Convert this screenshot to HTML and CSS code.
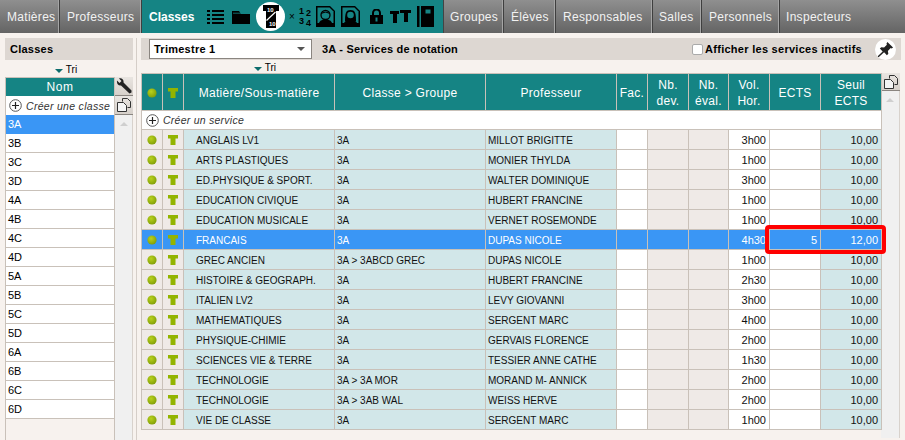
FILE: index.html
```html
<!DOCTYPE html>
<html lang="fr">
<head>
<meta charset="utf-8">
<title>Classes - Services de notation</title>
<link rel="stylesheet" href="styles.css">
</head>
<body>
<svg class="defs" width="0" height="0" aria-hidden="true">
  <defs>
    <radialGradient id="dot" cx="40%" cy="35%" r="70%"><stop offset="0" stop-color="#b9d21c"/><stop offset="1" stop-color="#7f9c06"/></radialGradient>
    <symbol id="shirt" viewBox="0 0 10 10"><path d="M0 0h10v3.500H7.500V10h-5V3.500H0z" fill="#93b400"/></symbol>
    <symbol id="ball" viewBox="0 0 10 10"><circle cx="5" cy="5" r="4.600" fill="url(#dot)"/></symbol>
    <symbol id="plus" viewBox="0 0 13 13"><circle cx="6.500" cy="6.500" r="5.800" fill="#fff" stroke="#555" stroke-width="1"/><path d="M6.500 3v7M3 6.500h7" stroke="#222" stroke-width="1.200"/></symbol>
    <symbol id="copy" viewBox="0 0 14 14"><path d="M5.500 3.500V.5h5l3 3v6h-3" fill="none" stroke="#333"/><path d="M.5 4.500h6l3 3v6h-9z" fill="#f4f4f4" stroke="#333"/></symbol>
  </defs>
</svg>
<nav class="nav">
  <a class="tab tab-matieres">Matières</a>
  <a class="tab tab-profs">Professeurs</a>
  <div class="tab-active">
    <span class="active-label">Classes</span>
    <svg class="ic ic-list" viewBox="0 0 17 14"><path d="M0 0h3v2H0zM5 0h12v2H5zM0 4h3v2H0zM5 4h12v2H5zM0 8h3v2H0zM5 8h12v2H5zM0 12h3v2H0zM5 12h12v2H5z"/></svg>
    <svg class="ic ic-folder" viewBox="0 0 18 13"><path d="M0 0h7l2 3h9v10H0z"/><path d="M1 2.200h16" stroke="#158484" stroke-width=".8"/></svg>
    <span class="ic-round">
      <svg class="ic-note" viewBox="0 0 16 23"><path d="M0 0h16v6h-3v17H3V6H0z"/><path d="M3.500 15.500 12.500 7" stroke="#fff" stroke-width="1.200"/><text class="note-digits" x="4" y="7">10</text><text class="note-digits" x="6" y="21">10</text></svg>
    </span>
    <span class="frac"><span class="frac-x">×</span><span class="frac-n">1<br>3</span><span class="frac-n frac-low">2<br>4</span></span>
    <svg class="ic ic-photo" viewBox="0 0 19 21"><path d="M0 0h14l5 5v16H0z"/><path d="M1.500 1.500h12l4 4v11.500h-16z" fill="#158484"/><circle cx="9.500" cy="9" r="4.500" fill="none" stroke="#000" stroke-width="1.300"/><path d="M3 17c1-3 4-3.500 6.500-3.500S15 14 16 17z"/><path d="M5 8c1-3 8-3 9 0l-4.500-1.500z"/></svg>
    <svg class="ic ic-photo" viewBox="0 0 19 21"><path d="M0 0h14l5 5v16H0z"/><path d="M1.500 1.500h12l4 4v11.500h-16z" fill="#158484"/><path d="M4 15c0-8 1-11 5.500-11S15 7 15 15z"/><circle cx="9.500" cy="9" r="3.300" fill="#158484"/><path d="M3 17c1-2.500 4-3 6.500-3s5.500.5 6.500 3z"/></svg>
    <svg class="ic ic-lock" viewBox="0 0 13 15"><path d="M3 6V4a3.500 3.500 0 0 1 7 0v2" fill="none" stroke="#000" stroke-width="2"/><path d="M0 6h13v9H0z"/><path d="M5.500 8.500h2v4h-2z" fill="#158484"/></svg>
    <svg class="ic ic-shirts" viewBox="0 0 21 13"><path d="M0 1h9v3H7v9H3V4H0z"/><path d="M10 0h11v3h-3v9h-4V3h-4z"/></svg>
    <svg class="ic ic-book" viewBox="0 0 17 21"><path d="M0 0h2.500v21H0zM4 0H17v21H4z"/><path d="M8.500 3.500h5v4h-5z" fill="#158484"/></svg>
  </div>
  <a class="tab tab-groupes">Groupes</a>
  <a class="tab tab-eleves">Élèves</a>
  <a class="tab tab-resp">Responsables</a>
  <a class="tab tab-salles">Salles</a>
  <a class="tab tab-pers">Personnels</a>
  <a class="tab tab-insp">Inspecteurs</a>
</nav>

<div class="content">
  <aside class="left">
    <div class="bar left-title">Classes</div>
    <div class="tri tri-left"><i class="tri-arrow"></i>Tri</div>
    <div class="left-body">
      <div class="left-list">
        <div class="list-head">Nom</div>
        <div class="list-create"><svg class="plus"><use href="#plus"/></svg><em>Créer une classe</em></div>
        <div class="list-item selected">3A</div>
        <div class="list-item">3B</div>
        <div class="list-item">3C</div>
        <div class="list-item">3D</div>
        <div class="list-item">4A</div>
        <div class="list-item">4B</div>
        <div class="list-item">4C</div>
        <div class="list-item">4D</div>
        <div class="list-item">5A</div>
        <div class="list-item">5B</div>
        <div class="list-item">5C</div>
        <div class="list-item">5D</div>
        <div class="list-item">6A</div>
        <div class="list-item">6B</div>
        <div class="list-item">6C</div>
        <div class="list-item">6D</div>
      </div>
      <div class="left-side">
        <button class="side-btn"><svg class="wrench" viewBox="0 0 16 16"><path d="M1 2.500 3.500 5 5.500 3 3 .5C5.500-.5 8 1.500 7.500 4.500L15.500 12.500 15.500 14.500 13.500 15.500 5 7.500C2.500 8 .5 5.500 1 2.500z" fill="#222"/></svg></button>
        <button class="side-btn"><svg class="copy"><use href="#copy"/></svg></button>
        <div class="scroll"><i class="scroll-up"></i></div>
      </div>
    </div>
  </aside>

  <main class="main">
    <div class="bar main-bar">
      <div class="select">Trimestre 1<i class="select-arrow"></i></div>
      <strong class="main-title">3A - Services de notation</strong>
      <label class="inactive"><i class="check"></i>Afficher les services inactifs</label>
      <span class="pin"><svg viewBox="0 0 18 18"><path d="M11 1l6 6-1.500 1-1-.5-3 3 .5 3-1.500 1.500-3-3L2 17l-1 0 0-1 5-5-3-3L4.500 6.500l3 .5 3-3-.5-1z" fill="#222"/></svg></span>
    </div>
    <div class="tri tri-main"><i class="tri-arrow"></i>Tri</div>
    <div class="table-area">
      <div class="table-wrap">
        <table class="grid">
          <colgroup>
            <col class="c1"><col class="c2"><col class="c3"><col class="c4"><col class="c5"><col class="c6"><col class="c7"><col class="c8"><col class="c9"><col class="c10"><col class="c11">
          </colgroup>
          <thead>
            <tr>
              <th><svg class="ball"><use href="#ball"/></svg></th>
              <th><svg class="shirt"><use href="#shirt"/></svg></th>
              <th>Matière/Sous-matière</th>
              <th>Classe &gt; Groupe</th>
              <th>Professeur</th>
              <th>Fac.</th>
              <th>Nb.<br>dev.</th>
              <th>Nb.<br>éval.</th>
              <th>Vol.<br>Hor.</th>
              <th>ECTS</th>
              <th>Seuil<br>ECTS</th>
            </tr>
          </thead>
          <tbody>
            <tr class="create"><td colspan="11"><svg class="plus"><use href="#plus"/></svg><em>Créer un service</em></td></tr>
            <tr><td class="g"><svg class="ball"><use href="#ball"/></svg></td><td class="g"><svg class="shirt"><use href="#shirt"/></svg></td><td class="t mat">ANGLAIS LV1</td><td class="t">3A</td><td class="t">MILLOT BRIGITTE</td><td></td><td class="g"></td><td class="g"></td><td class="r">3h00</td><td class="r"></td><td class="t r">10,00</td></tr>
            <tr><td class="g"><svg class="ball"><use href="#ball"/></svg></td><td class="g"><svg class="shirt"><use href="#shirt"/></svg></td><td class="t mat">ARTS PLASTIQUES</td><td class="t">3A</td><td class="t">MONIER THYLDA</td><td></td><td class="g"></td><td class="g"></td><td class="r">1h00</td><td class="r"></td><td class="t r">10,00</td></tr>
            <tr><td class="g"><svg class="ball"><use href="#ball"/></svg></td><td class="g"><svg class="shirt"><use href="#shirt"/></svg></td><td class="t mat">ED.PHYSIQUE &amp; SPORT.</td><td class="t">3A</td><td class="t">WALTER DOMINIQUE</td><td></td><td class="g"></td><td class="g"></td><td class="r">3h00</td><td class="r"></td><td class="t r">10,00</td></tr>
            <tr><td class="g"><svg class="ball"><use href="#ball"/></svg></td><td class="g"><svg class="shirt"><use href="#shirt"/></svg></td><td class="t mat">EDUCATION CIVIQUE</td><td class="t">3A</td><td class="t">HUBERT FRANCINE</td><td></td><td class="g"></td><td class="g"></td><td class="r">1h00</td><td class="r"></td><td class="t r">10,00</td></tr>
            <tr><td class="g"><svg class="ball"><use href="#ball"/></svg></td><td class="g"><svg class="shirt"><use href="#shirt"/></svg></td><td class="t mat">EDUCATION MUSICALE</td><td class="t">3A</td><td class="t">VERNET ROSEMONDE</td><td></td><td class="g"></td><td class="g"></td><td class="r">1h00</td><td class="r"></td><td class="t r">10,00</td></tr>
            <tr class="sel"><td><svg class="ball"><use href="#ball"/></svg></td><td><svg class="shirt"><use href="#shirt"/></svg></td><td class="mat">FRANCAIS</td><td>3A</td><td>DUPAS NICOLE</td><td></td><td></td><td></td><td class="r">4h30</td><td class="r">5</td><td class="r">12,00</td></tr>
            <tr><td class="g"><svg class="ball"><use href="#ball"/></svg></td><td class="g"><svg class="shirt"><use href="#shirt"/></svg></td><td class="t mat">GREC ANCIEN</td><td class="t">3A &gt; 3ABCD GREC</td><td class="t">DUPAS NICOLE</td><td></td><td class="g"></td><td class="g"></td><td class="r">1h00</td><td class="r"></td><td class="t r">10,00</td></tr>
            <tr><td class="g"><svg class="ball"><use href="#ball"/></svg></td><td class="g"><svg class="shirt"><use href="#shirt"/></svg></td><td class="t mat">HISTOIRE &amp; GEOGRAPH.</td><td class="t">3A</td><td class="t">HUBERT FRANCINE</td><td></td><td class="g"></td><td class="g"></td><td class="r">2h30</td><td class="r"></td><td class="t r">10,00</td></tr>
            <tr><td class="g"><svg class="ball"><use href="#ball"/></svg></td><td class="g"><svg class="shirt"><use href="#shirt"/></svg></td><td class="t mat">ITALIEN LV2</td><td class="t">3A</td><td class="t">LEVY GIOVANNI</td><td></td><td class="g"></td><td class="g"></td><td class="r">3h00</td><td class="r"></td><td class="t r">10,00</td></tr>
            <tr><td class="g"><svg class="ball"><use href="#ball"/></svg></td><td class="g"><svg class="shirt"><use href="#shirt"/></svg></td><td class="t mat">MATHEMATIQUES</td><td class="t">3A</td><td class="t">SERGENT MARC</td><td></td><td class="g"></td><td class="g"></td><td class="r">4h00</td><td class="r"></td><td class="t r">10,00</td></tr>
            <tr><td class="g"><svg class="ball"><use href="#ball"/></svg></td><td class="g"><svg class="shirt"><use href="#shirt"/></svg></td><td class="t mat">PHYSIQUE-CHIMIE</td><td class="t">3A</td><td class="t">GERVAIS FLORENCE</td><td></td><td class="g"></td><td class="g"></td><td class="r">2h00</td><td class="r"></td><td class="t r">10,00</td></tr>
            <tr><td class="g"><svg class="ball"><use href="#ball"/></svg></td><td class="g"><svg class="shirt"><use href="#shirt"/></svg></td><td class="t mat">SCIENCES VIE &amp; TERRE</td><td class="t">3A</td><td class="t">TESSIER ANNE CATHE</td><td></td><td class="g"></td><td class="g"></td><td class="r">1h30</td><td class="r"></td><td class="t r">10,00</td></tr>
            <tr><td class="g"><svg class="ball"><use href="#ball"/></svg></td><td class="g"><svg class="shirt"><use href="#shirt"/></svg></td><td class="t mat">TECHNOLOGIE</td><td class="t">3A &gt; 3A MOR</td><td class="t">MORAND M- ANNICK</td><td></td><td class="g"></td><td class="g"></td><td class="r">2h00</td><td class="r"></td><td class="t r">10,00</td></tr>
            <tr><td class="g"><svg class="ball"><use href="#ball"/></svg></td><td class="g"><svg class="shirt"><use href="#shirt"/></svg></td><td class="t mat">TECHNOLOGIE</td><td class="t">3A &gt; 3AB WAL</td><td class="t">WEISS HERVE</td><td></td><td class="g"></td><td class="g"></td><td class="r">2h00</td><td class="r"></td><td class="t r">10,00</td></tr>
            <tr><td class="g"><svg class="ball"><use href="#ball"/></svg></td><td class="g"><svg class="shirt"><use href="#shirt"/></svg></td><td class="t mat">VIE DE CLASSE</td><td class="t">3A</td><td class="t">SERGENT MARC</td><td></td><td class="g"></td><td class="g"></td><td class="r">1h00</td><td class="r"></td><td class="t r">10,00</td></tr>
          </tbody>
        </table>
        <div class="highlight"></div>
      </div>
      <div class="main-side">
        <button class="side-btn side-btn-main"><svg class="copy"><use href="#copy"/></svg></button>
        <div class="scroll"><i class="scroll-up"></i></div>
      </div>
    </div>
  </main>
</div>
</body>
</html>
```

FILE: styles.css
```css
* { box-sizing: border-box; }
html, body { margin: 0; height: 100%; overflow: hidden; }
body {
  width: 905px;
  height: 440px;
  background: #f7f2ee;
  font-family: "Liberation Sans", Arial, sans-serif;
  font-size: 11px;
  color: #000;
}
.defs { position: absolute; }

/* top nav */
.nav {
  display: flex;
  height: 33px;
  background: linear-gradient(#8f8f8f, #646464);
}
.tab {
  display: flex;
  align-items: center;
  padding-left: 6px;
  color: #f2f2f2;
  font-size: 12px;
  letter-spacing: .3px;
  border-right: 1px solid #3f3f3f;
  box-shadow: inset -1px 0 0 #a5a5a5;
  white-space: nowrap;
}
.tab-matieres { width: 60px; padding-left: 7px; }
.tab-profs { width: 82px; padding-left: 7px; }
.tab-groupes { width: 61px; border-left: 1px solid #444; }
.tab-eleves { width: 52px; padding-left: 7px; }
.tab-resp { width: 97px; padding-left: 7px; }
.tab-salles { width: 49px; }
.tab-pers { width: 78px; padding-left: 7px; }
.tab-insp { flex: 1; border-right: 0; box-shadow: none; }
.tab-active {
  width: 301px;
  display: flex;
  align-items: center;
  background: #158484;
}
.active-label {
  color: #fff;
  font-weight: bold;
  font-size: 12px;
  margin-left: 7px;
  width: 58px;
}
.ic { display: block; fill: #000; flex: none; }
.ic-list { width: 17px; height: 14px; margin-right: 8px; }
.ic-folder { width: 18px; height: 13px; margin-right: 6px; margin-top: 2px; }
.ic-round {
  width: 29px;
  height: 29px;
  border-radius: 50%;
  background: #fff;
  display: flex;
  align-items: center;
  justify-content: center;
  margin-right: 4px;
}
.ic-note { width: 16px; height: 23px; display: block; }
.note-digits { font-size: 6px; font-weight: bold; fill: #fff; font-family: "Liberation Sans", Arial, sans-serif; }
.frac {
  display: flex;
  align-items: center;
  width: 27px;
  color: #000;
  flex: none;
}
.frac-x { font-size: 10px; margin-right: 1px; width: 8px; }
.frac-n { font-size: 9px; font-weight: bold; line-height: 10.500px; text-align: center; width: 7px; margin-top: -1px; }
.frac-low { margin-top: 3px; }
.ic-photo { width: 19px; height: 21px; margin-right: 6px; }
.ic-lock { width: 13px; height: 15px; margin-left: 4px; margin-right: 7px; }
.ic-shirts { width: 21px; height: 13px; margin-right: 6px; }
.ic-book { width: 17px; height: 21px; }

/* content */
.content {
  display: flex;
  padding: 5px 5px 0 5px;
  height: 407px;
}
.bar {
  height: 22px;
  background: #ddd7d2;
  display: flex;
  align-items: center;
  font-weight: bold;
}
.left { width: 128px; margin-right: 3px; flex: none; }
.left-title { padding-left: 5px; letter-spacing: .25px; }
.tri {
  font-size: 10px;
  height: 12px;
  line-height: 12px;
  display: flex;
  align-items: center;
  justify-content: center;
}
.tri-arrow {
  width: 0;
  height: 0;
  border-style: solid;
  border-width: 4px 4.500px 0 4.500px;
  border-color: #0d6c6c transparent transparent;
  margin-right: 3px;
  margin-top: 2px;
}
.tri-left { margin-top: 4px; width: 122px; }
.left-body { display: flex; margin-top: 1px; height: 363px; }
.left-list {
  width: 110px;
  height: 363px;
  border-left: 1px solid #c9c1b9;
  border-right: 1px solid #c9c1b9;
}
.list-head {
  height: 19px;
  background: #158484;
  color: #fff;
  border-top: 1px solid #c9c1b9;
  text-align: center;
  font-size: 12px;
  line-height: 18px;
  letter-spacing: .5px;
}
.list-create {
  height: 19px;
  background: #fff;
  display: flex;
  align-items: center;
  padding-left: 3px;
  font-size: 10.500px;
  color: #333;
  white-space: nowrap;
  letter-spacing: .3px;
}
.plus { width: 13px; height: 13px; flex: none; margin-right: 4px; }
.list-item {
  height: 19px;
  background: #fff;
  border-bottom: 1px solid #c9c1b9;
  padding-left: 2px;
  line-height: 18px;
  font-size: 11px;
}
.list-item.selected { background: #3a96f5; color: #fff; border-bottom-color: #3a96f5; }
.left-side { width: 18px; display: flex; flex-direction: column; }
.side-btn {
  display: flex;
  align-items: center;
  justify-content: center;
  width: 18px;
  height: 19px;
  padding: 0;
  border: 0;
  border-bottom: 1px solid #8a8580;
  background: linear-gradient(#e9e5e1, #d6d0ca);
}
.wrench { width: 16px; height: 16px; }
.copy { width: 14px; height: 14px; }
.scroll {
  flex: 1;
  background: #f0f0f0;
  display: flex;
  justify-content: center;
  padding-top: 7px;
  border-right: 1px solid #d8d2cc;
}
.scroll-up {
  width: 0;
  height: 0;
  border-style: solid;
  border-width: 0 4px 4px 4px;
  border-color: transparent transparent #cfcfcf;
}

/* main */
.main {
  flex: 1;
  border-left: 1px solid #d5cec8;
  padding-left: 4px;
  min-width: 0;
}
.main-bar { padding-left: 8px; width: 760px; }
.select {
  width: 163px;
  height: 20px;
  background: #fff;
  border: 1px solid #8a8580;
  display: flex;
  align-items: center;
  justify-content: space-between;
  padding: 0 6px 0 4px;
  letter-spacing: .25px;
}
.select-arrow {
  width: 0;
  height: 0;
  border-style: solid;
  border-width: 4px 4px 0 4px;
  border-color: #555 transparent transparent;
}
.main-title { margin-left: 10px; letter-spacing: .2px; }
.inactive {
  margin-left: auto;
  display: flex;
  align-items: center;
  letter-spacing: .28px;
  margin-right: 13px;
}
.check {
  width: 11px;
  height: 11px;
  background: #fff;
  border: 1px solid #aaa;
  border-radius: 2px;
  margin-right: 2px;
}
.pin {
  width: 21px;
  height: 21px;
  border-radius: 50%;
  background: #fff;
  display: flex;
  align-items: center;
  justify-content: center;
  margin-right: 5px;
}
.pin svg { width: 17px; height: 17px; display: block; }
.tri-main { margin-top: 2px; height: 11px; width: 135px; justify-content: flex-end; }
.table-area { display: flex; height: 365px; }
.table-wrap { position: relative; width: 740px; flex: none; }
.grid {
  border-collapse: collapse;
  table-layout: fixed;
  width: 741px;
  font-size: 10px;
  color: #111;
}
.c1, .c2 { width: 21px; }
.c3, .c4 { width: 151px; }
.c5 { width: 131px; }
.c6 { width: 31px; }
.c7 { width: 41px; }
.c8 { width: 40px; }
.c9 { width: 41px; }
.c10 { width: 51px; }
.c11 { width: 61px; }
.grid th, .grid td { border: 1px solid #c9c1b9; padding: 0; overflow: hidden; white-space: nowrap; }
.grid th {
  height: 37px;
  padding-top: 1px;
  background: #158484;
  color: #fff;
  font-weight: normal;
  font-size: 12px;
  line-height: 16px;
  letter-spacing: .3px;
}
.grid td { height: 20px; background: #fff; padding: 1px 0 0 2px; }
.grid td.g { background: #efeae7; text-align: center; padding: 0; }
.grid td.t { background: #d2e7e9; }
.grid td.mat { padding-left: 12px; }
.grid td.r { text-align: right; padding: 0 3px 0 0; font-size: 11px; }
.grid .create td { height: 19px; background: #fff; padding: 0 0 0 4px; font-size: 10.500px; letter-spacing: .25px; color: #333; }
.grid .create td svg { vertical-align: middle; }
.grid .create em { vertical-align: middle; }
.grid .sel td { background: #3a96f5; color: #fff; }
.grid .sel td:nth-child(-n+2) { text-align: center; padding: 0; }
.ball { width: 10px; height: 10px; display: block; margin: 0 auto; }
.shirt { width: 10px; height: 10px; display: block; margin: 0 auto; }
.highlight {
  position: absolute;
  left: 624px;
  top: 152px;
  width: 121px;
  height: 29px;
  border: 4px solid #f00;
  border-radius: 4px;
}
.main-side { width: 19px; display: flex; flex-direction: column; flex: none; }
.side-btn-main { width: 19px; height: 18px; }
```
